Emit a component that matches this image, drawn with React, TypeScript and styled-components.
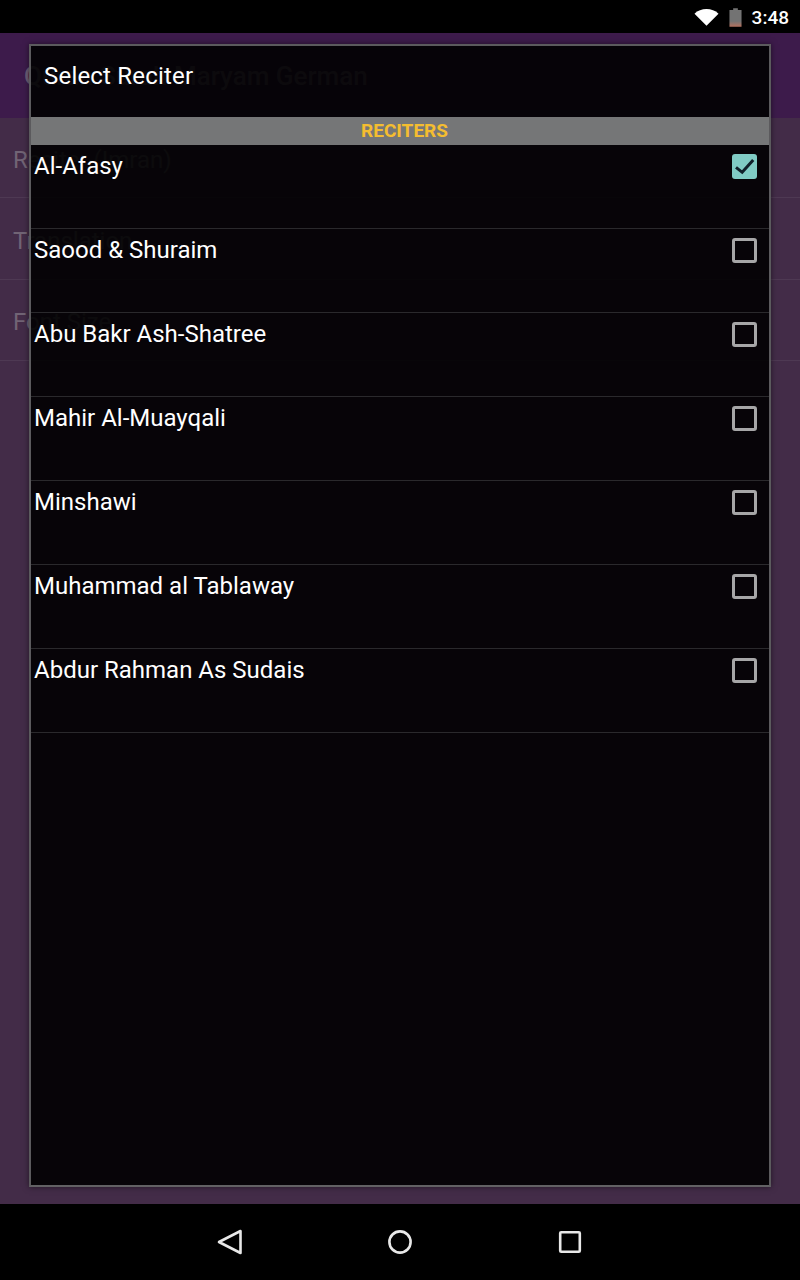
import React from "react";
import styled, { createGlobalStyle } from "styled-components";

const Global = createGlobalStyle`
  html, body { margin: 0; padding: 0; background: #000; }
  body { font-family: Roboto, "Liberation Sans", sans-serif; }
`;

const Screen = styled.div`
  position: relative;
  width: 800px;
  height: 1280px;
  display: flex;
  flex-direction: column;
  overflow: hidden;
  background: #000;
`;

const StatusBar = styled.div`
  height: 33px;
  flex: none;
  display: flex;
  align-items: center;
  justify-content: flex-end;
  padding: 1px 11px 0 0;
  box-sizing: border-box;
  background: #000;
`;

const StatusIcon = styled.svg<{ $gap: number }>`
  display: block;
  margin-right: ${(p) => p.$gap}px;
`;

const Clock = styled.span`
  color: #fff;
  font-size: 19px;
  font-weight: 500;
`;

const AppBar = styled.div`
  height: 85px;
  flex: none;
  display: flex;
  align-items: center;
  padding: 0 0 0 24px;
  box-sizing: border-box;
  background: #3d1b4b;
  color: #6f5f76;
  font-size: 26px;
  font-weight: 500;
`;

const Content = styled.div`
  flex: 1;
  background: #432c48;
`;

const SettingRow = styled.div<{ $h: number }>`
  height: ${(p) => p.$h}px;
  box-sizing: border-box;
  padding: 4px 0 0 13px;
  display: flex;
  align-items: center;
  color: #716475;
  font-size: 24px;
  border-bottom: 1px solid #4e3953;
`;

const NavBar = styled.div`
  height: 76px;
  flex: none;
  background: #000;
  display: grid;
  grid-template-columns: 60px 60px 60px;
  justify-content: center;
  column-gap: 110px;
  align-items: center;
`;

const NavIcon = styled.svg`
  display: block;
  margin: 0 auto;
`;

const Dialog = styled.div`
  position: absolute;
  left: 29px;
  top: 44px;
  width: 742px;
  height: 1143px;
  box-sizing: border-box;
  border: 2px solid #5b5a5d;
  border-bottom-color: #626164;
  background: rgba(0, 0, 0, 0.89);
  box-shadow: 0 0 6px rgba(0, 0, 0, 0.5);
  display: flex;
  flex-direction: column;
`;

const DialogTitle = styled.div`
  height: 71px;
  flex: none;
  padding: 15px 0 0 13px;
  box-sizing: border-box;
  color: #fff;
  font-size: 24px;
  line-height: 30px;
  letter-spacing: 0.2px;
`;

const SectionHeader = styled.div`
  height: 28px;
  flex: none;
  background: #757677;
  color: #f4bd30;
  font-size: 19px;
  font-weight: 700;
  line-height: 28px;
  text-align: center;
  padding-left: 9px;
`;

const List = styled.div`
  display: flex;
  flex-direction: column;
`;

const Row = styled.div`
  height: 84px;
  box-sizing: border-box;
  display: flex;
  justify-content: space-between;
  align-items: flex-start;
  padding: 5px 12px 0 3px;
  border-bottom: 1px solid #2a292c;
  color: #fff;
  font-size: 24px;
  line-height: 32px;
`;

const CheckBox = styled.span<{ $checked?: boolean }>`
  width: 25px;
  height: 25px;
  margin-top: 4px;
  box-sizing: border-box;
  border-radius: 3px;
  display: flex;
  align-items: center;
  justify-content: center;
  background: ${(p) => (p.$checked ? "#80cbc4" : "transparent")};
  border: ${(p) => (p.$checked ? "none" : "3px solid #a6a6a7")};
`;

const reciters = [
  "Al-Afasy",
  "Saood & Shuraim",
  "Abu Bakr Ash-Shatree",
  "Mahir Al-Muayqali",
  "Minshawi",
  "Muhammad al Tablaway",
  "Abdur Rahman As Sudais",
];

export default function App() {
  return (
    <Screen>
      <Global />
      <StatusBar>
        <StatusIcon $gap={10} width="25" height="18" viewBox="0 0 26 18">
          <path d="M0.5 5.5 C7 -0.8 19 -0.8 25.5 5.5 L13 18 Z" fill="#fff" />
        </StatusIcon>
        <StatusIcon $gap={10} width="13" height="19" viewBox="0 0 14 20">
          <defs>
            <linearGradient id="battery" x1="0" y1="0" x2="0" y2="1">
              <stop offset="0.7" stopColor="#737373" />
              <stop offset="1" stopColor="#b5725f" />
            </linearGradient>
          </defs>
          <path d="M4.5 0 H9.5 V2 H13.5 V20 H0.5 V2 H4.5 Z" fill="url(#battery)" />
        </StatusIcon>
        <Clock>3:48</Clock>
      </StatusBar>
      <AppBar>Quran Surah Maryam German</AppBar>
      <Content>
        <SettingRow $h={80}>Reciter (Imran)</SettingRow>
        <SettingRow $h={82}>Translation</SettingRow>
        <SettingRow $h={81}>Font Size</SettingRow>
      </Content>
      <NavBar>
        <NavIcon width="26" height="26" viewBox="0 0 26 26">
          <path d="M23.5 2 V24 L2 13 Z" fill="none" stroke="#e8e8e8" strokeWidth="2.6" strokeLinejoin="round" />
        </NavIcon>
        <NavIcon width="26" height="26" viewBox="0 0 26 26">
          <circle cx="13" cy="13" r="10.6" fill="none" stroke="#e8e8e8" strokeWidth="2.6" />
        </NavIcon>
        <NavIcon width="24" height="24" viewBox="0 0 24 24">
          <rect x="2.2" y="2.2" width="19.6" height="19.6" rx="1" fill="none" stroke="#e8e8e8" strokeWidth="2.6" />
        </NavIcon>
      </NavBar>
      <Dialog>
        <DialogTitle>Select Reciter</DialogTitle>
        <SectionHeader>RECITERS</SectionHeader>
        <List>
          {reciters.map((name, i) => (
            <Row key={name}>
              {name}
              <CheckBox $checked={i === 0}>
                {i === 0 && (
                  <svg width="25" height="25" viewBox="0 0 25 25">
                    <path d="M4 13.3 L10.2 18.3 L21.2 6" fill="none" stroke="#10202a" strokeWidth="3" />
                  </svg>
                )}
              </CheckBox>
            </Row>
          ))}
        </List>
      </Dialog>
    </Screen>
  );
}
